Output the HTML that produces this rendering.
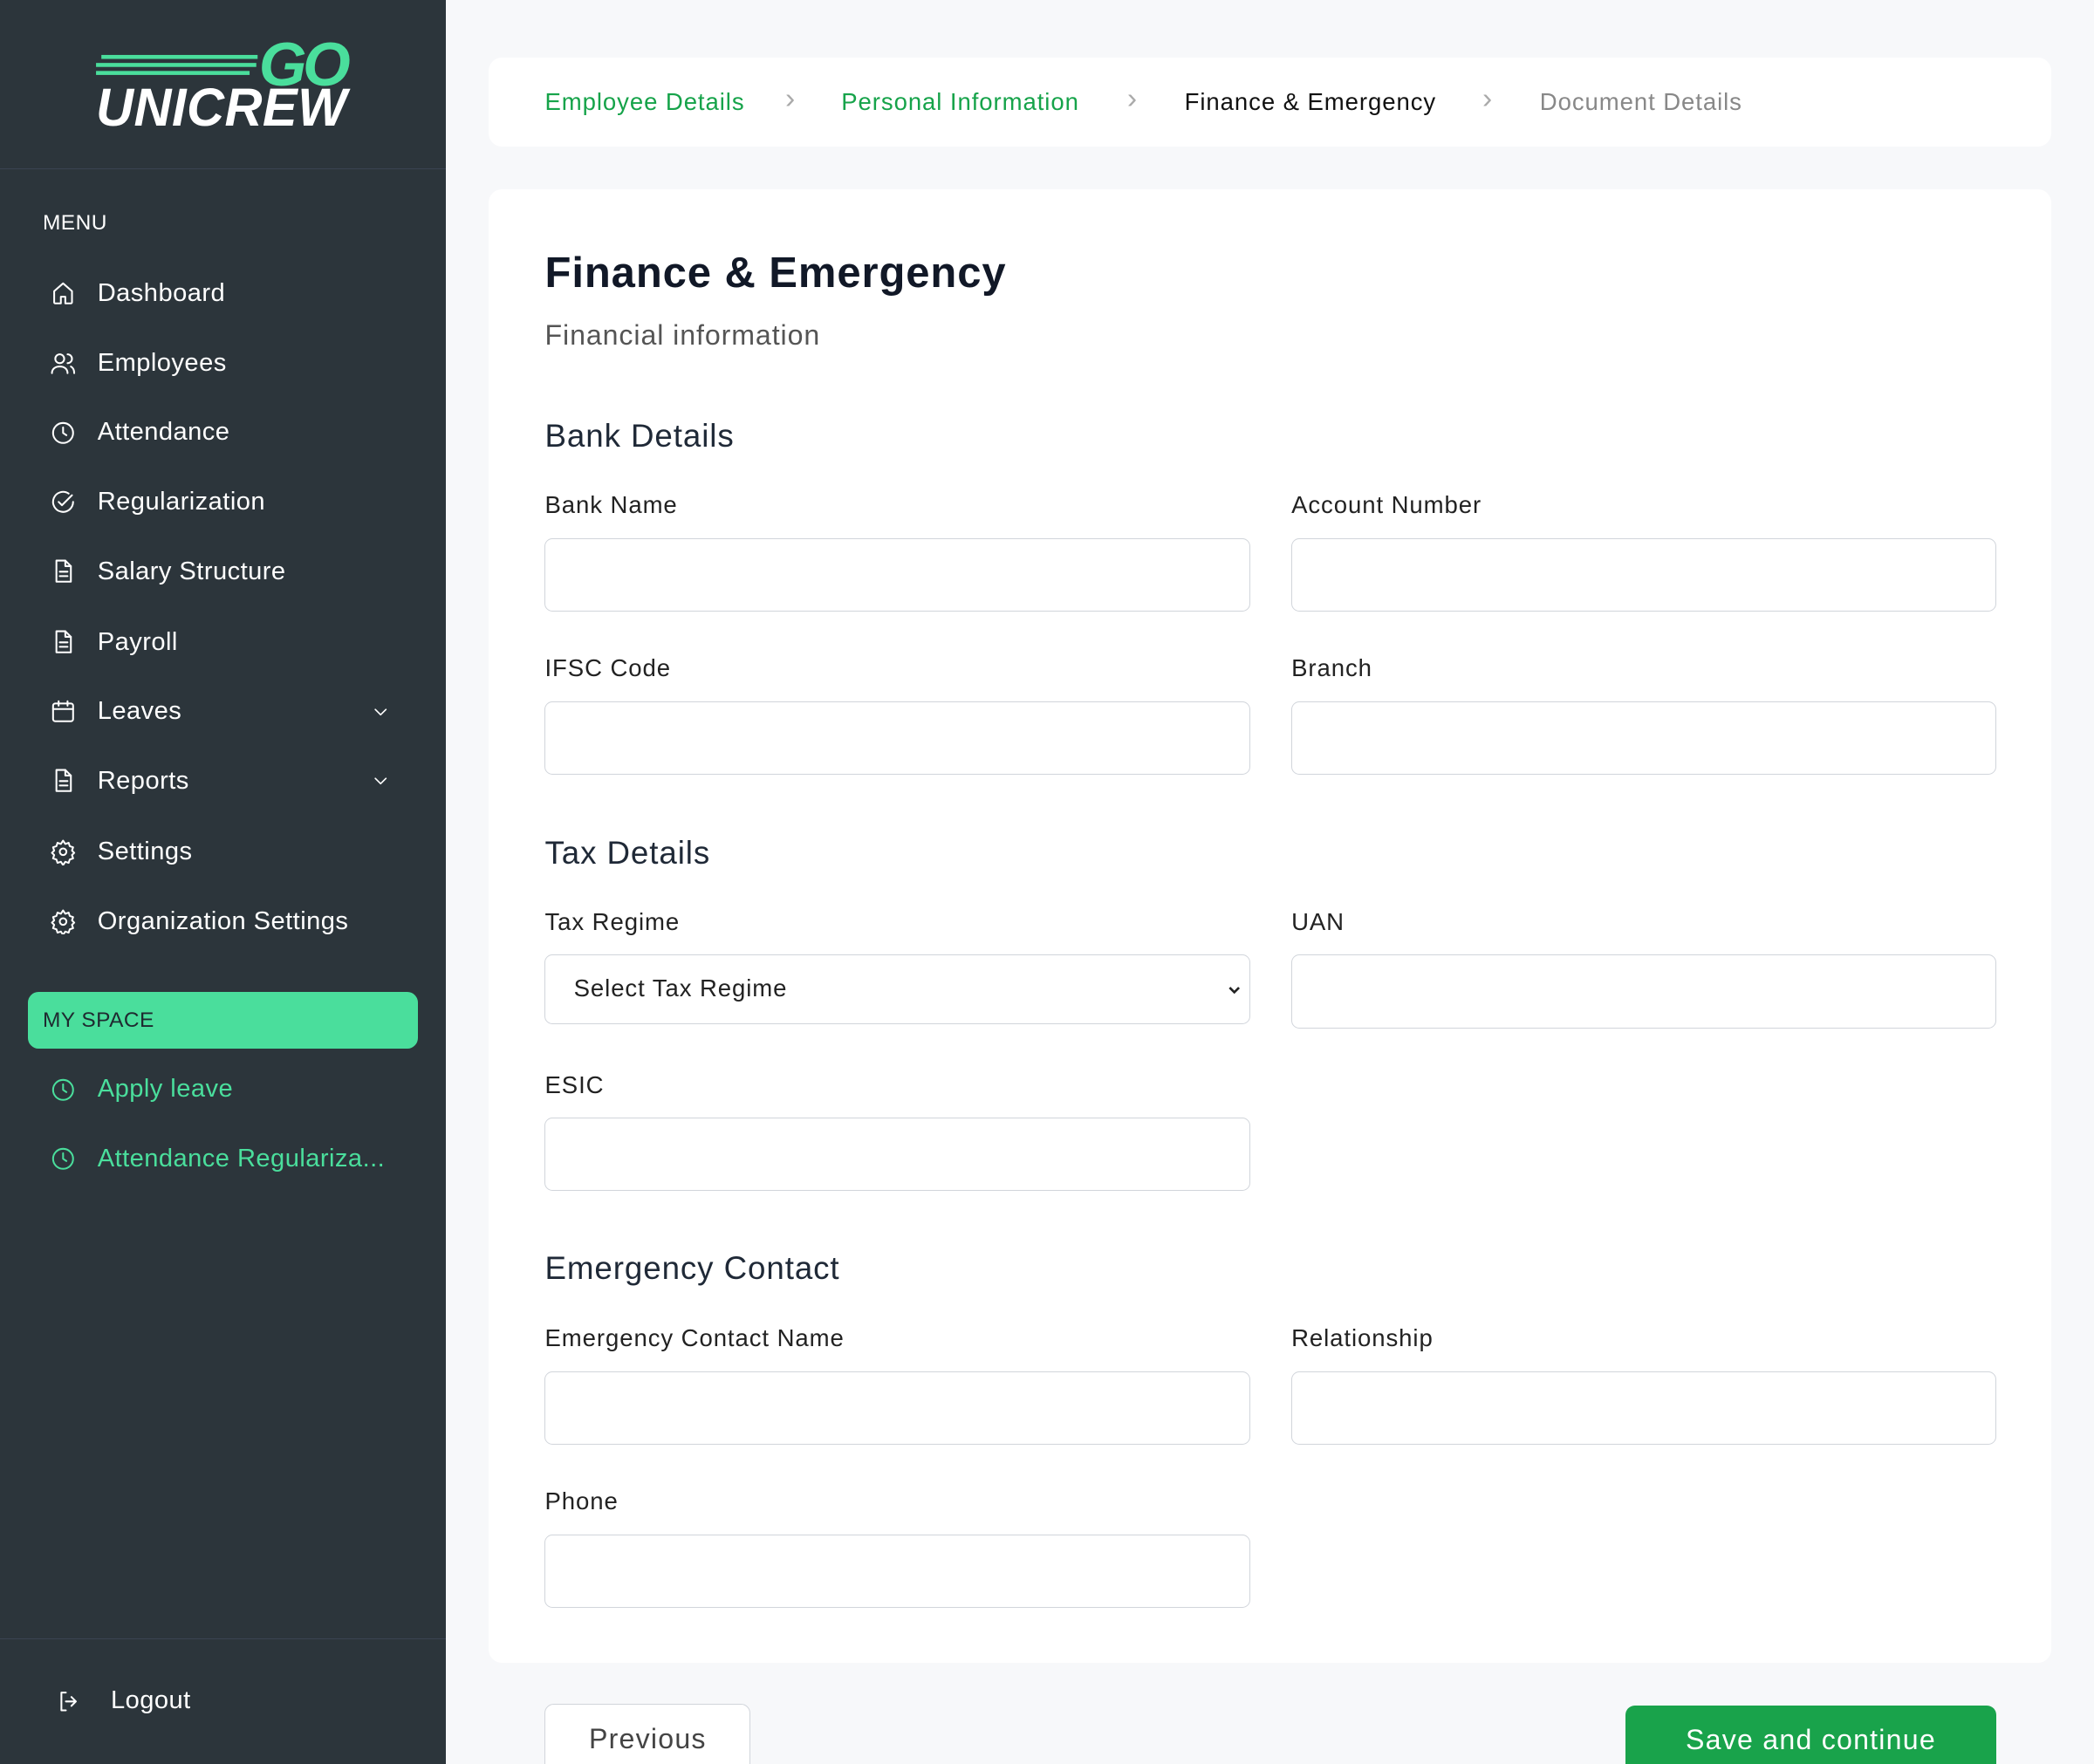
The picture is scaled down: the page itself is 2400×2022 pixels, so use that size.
<!DOCTYPE html>
<html><head><meta charset="utf-8">
<style>
html{zoom:1.5306;background:#f7f8fa;overflow:hidden;height:1321px}
*{box-sizing:border-box;margin:0;padding:0}
body{width:1568px;height:1321px;overflow:hidden;background:#f7f8fa;font-family:"Liberation Sans",sans-serif;position:relative;letter-spacing:0.3px}
.sb{position:absolute;left:0;top:0;width:334px;height:1321px;background:#2c353b;color:#fff}
.sb .div{position:absolute;left:0;right:0;top:126px;border-top:1px solid #3a4452}
.sb .div2{position:absolute;left:0;right:0;top:1227px;border-top:1px solid #3a4452}
.mi{position:absolute;left:37px;height:30px;display:flex;align-items:center;font-size:19px;color:#fff}
.mi svg{width:20px;height:20px;margin-right:16px;fill:none;stroke:currentColor;stroke-width:1.6;stroke-linecap:round;stroke-linejoin:round}
.mi .chev{position:absolute;left:240px;width:16px;height:16px}
.g{color:#4ade9c}
.ms{position:absolute;left:21px;top:743px;width:292px;height:42px;background:#4ade9c;border-radius:8px;color:#1f2a30;font-size:16px;padding:12px 11px}
.card{position:absolute;background:#fff;border-radius:10px;left:366px;width:1170px}
.bc{top:43px;height:67px;font-size:18px}
.bc span{position:absolute;top:23px;letter-spacing:0.6px}
.bc i{position:absolute;top:19px;font-style:normal;color:#aaa;font-size:22px}
.t{position:absolute;color:#1f2937}
.lbl{position:absolute;font-size:18px;color:#222;letter-spacing:0.6px}
.in{position:absolute;width:528px;height:55px;border:1px solid #d1d5db;border-radius:6px;background:#fff}
.btn{position:absolute;border-radius:7px;font-size:21px;text-align:center;letter-spacing:0.8px}
</style></head><body>
<div class="sb">
<svg style="position:absolute;left:70px;top:26px" width="195" height="72" viewBox="0 0 195 72">
<rect x="6" y="15" width="117" height="3" fill="#4ade9c"/><rect x="2" y="21" width="120" height="3" fill="#4ade9c"/><rect x="2" y="27" width="115" height="3" fill="#4ade9c"/>
<text x="124" y="38" font-family="Liberation Sans" font-weight="bold" font-style="italic" font-size="46" fill="#4ade9c" letter-spacing="-3">GO</text>
<text x="2" y="68" font-family="Liberation Sans" font-weight="bold" font-style="italic" font-size="40" fill="#fff" textLength="188" lengthAdjust="spacingAndGlyphs">UNICREW</text>
</svg>
<div class="div"></div>
<div style="position:absolute;left:32px;top:158px;font-size:16px">MENU</div>
<div class="mi" style="top:205px"><svg viewBox="0 0 24 24"><path d="M4 10l8-7 8 7v10a1 1 0 0 1-1 1h-5v-6h-4v6H5a1 1 0 0 1-1-1z"/></svg>Dashboard</div>
<div class="mi" style="top:257px"><svg viewBox="0 0 24 24"><circle cx="9" cy="8" r="4"/><path d="M2 21c0-4 3-6 7-6s7 2 7 6M16 4a4 4 0 0 1 0 8M19 15c2 1 3 3 3 6"/></svg>Employees</div>
<div class="mi" style="top:309px"><svg viewBox="0 0 24 24"><circle cx="12" cy="12" r="9"/><path d="M12 7v5l3 2"/></svg>Attendance</div>
<div class="mi" style="top:361px"><svg viewBox="0 0 24 24"><path d="M21 12a9 9 0 1 1-4-7.5"/><path d="M8 12l3 3 9-9"/></svg>Regularization</div>
<div class="mi" style="top:413px"><svg viewBox="0 0 24 24"><path d="M6 2h8l5 5v14H6z"/><path d="M14 2v5h5M9 12h7M9 16h7"/></svg>Salary Structure</div>
<div class="mi" style="top:466px"><svg viewBox="0 0 24 24"><path d="M6 2h8l5 5v14H6z"/><path d="M14 2v5h5M9 12h7M9 16h7"/></svg>Payroll</div>
<div class="mi" style="top:518px"><svg viewBox="0 0 24 24"><rect x="3" y="5" width="18" height="16" rx="2"/><path d="M3 10h18M8 3v4M16 3v4"/></svg>Leaves<svg class="chev" viewBox="0 0 24 24"><path d="M6 9l6 6 6-6"/></svg></div>
<div class="mi" style="top:570px"><svg viewBox="0 0 24 24"><path d="M6 2h8l5 5v14H6z"/><path d="M14 2v5h5M9 12h7M9 16h7"/></svg>Reports<svg class="chev" viewBox="0 0 24 24"><path d="M6 9l6 6 6-6"/></svg></div>
<div class="mi" style="top:623px"><svg viewBox="0 0 24 24"><circle cx="12" cy="12" r="3"/><path d="M12 2l2 3 3-1 1 3 3 1-1 3 2 2-2 2 1 3-3 1-1 3-3-1-2 3-2-3-3 1-1-3-3-1 1-3-2-2 2-2-1-3 3-1 1-3 3 1z"/></svg>Settings</div>
<div class="mi" style="top:675px"><svg viewBox="0 0 24 24"><circle cx="12" cy="12" r="3"/><path d="M12 2l2 3 3-1 1 3 3 1-1 3 2 2-2 2 1 3-3 1-1 3-3-1-2 3-2-3-3 1-1-3-3-1 1-3-2-2 2-2-1-3 3-1 1-3 3 1z"/></svg>Organization Settings</div>
<div class="ms">MY SPACE</div>
<div class="mi g" style="top:801px"><svg viewBox="0 0 24 24"><circle cx="12" cy="12" r="9"/><path d="M12 7v5l3 2"/></svg>Apply leave</div>
<div class="mi g" style="top:853px"><svg viewBox="0 0 24 24"><circle cx="12" cy="12" r="9"/><path d="M12 7v5l3 2"/></svg>Attendance Regulariza...</div>
<div class="div2"></div>
<div class="mi" style="top:1259px;left:42px"><svg viewBox="0 0 24 24"><path d="M9 4H5v16h4M14 8l4 4-4 4M18 12H9"/></svg><span style="margin-left:5px">Logout</span></div>
</div>

<div class="card bc">
<span style="left:42px;color:#16a34a">Employee Details</span><i style="left:222px">›</i>
<span style="left:264px;color:#16a34a">Personal Information</span><i style="left:478px">›</i>
<span style="left:521px;color:#111">Finance &amp; Emergency</span><i style="left:744px">›</i>
<span style="left:787px;color:#888">Document Details</span>
</div>

<div class="card" style="top:142px;height:1103px"></div>
<div class="t" style="left:408px;top:186px;font-size:32px;font-weight:bold;color:#111827;letter-spacing:0.6px">Finance &amp; Emergency</div>
<div class="t" style="left:408px;top:239px;font-size:21px;color:#555;letter-spacing:0.6px">Financial information</div>

<div class="t" style="left:408px;top:313px;font-size:24px;letter-spacing:0.6px">Bank Details</div>
<div class="lbl" style="left:408px;top:368px">Bank Name</div><div class="lbl" style="left:967px;top:368px">Account Number</div>
<div class="in" style="left:408px;top:403px"></div><div class="in" style="left:967px;top:403px"></div>
<div class="lbl" style="left:408px;top:490px">IFSC Code</div><div class="lbl" style="left:967px;top:490px">Branch</div>
<div class="in" style="left:408px;top:525px"></div><div class="in" style="left:967px;top:525px"></div>

<div class="t" style="left:408px;top:625px;font-size:24px;letter-spacing:0.6px">Tax Details</div>
<div class="lbl" style="left:408px;top:680px">Tax Regime</div><div class="lbl" style="left:967px;top:680px">UAN</div>
<div class="in" style="left:408px;top:715px;height:52px;font-size:18px;padding:14px 21px;color:#222;letter-spacing:0.6px">Select Tax Regime<svg style="position:absolute;right:4px;top:19px" width="14" height="14" viewBox="0 0 24 24"><path d="M6 9l6 6 6-6" fill="none" stroke="#222" stroke-width="3"/></svg></div>
<div class="in" style="left:967px;top:715px"></div>
<div class="lbl" style="left:408px;top:802px">ESIC</div>
<div class="in" style="left:408px;top:837px"></div>

<div class="t" style="left:408px;top:936px;font-size:24px;letter-spacing:0.6px">Emergency Contact</div>
<div class="lbl" style="left:408px;top:992px">Emergency Contact Name</div><div class="lbl" style="left:967px;top:992px">Relationship</div>
<div class="in" style="left:408px;top:1027px"></div><div class="in" style="left:967px;top:1027px"></div>
<div class="lbl" style="left:408px;top:1114px">Phone</div>
<div class="in" style="left:408px;top:1149px"></div>

<div class="btn" style="left:408px;top:1276px;width:154px;height:60px;border:1px solid #d1d5db;background:#fff;color:#444;padding-top:14px">Previous</div>
<div class="btn" style="left:1217px;top:1277px;width:278px;height:60px;background:#19a34b;color:#fff;padding-top:14px">Save and continue</div>
</body></html>
